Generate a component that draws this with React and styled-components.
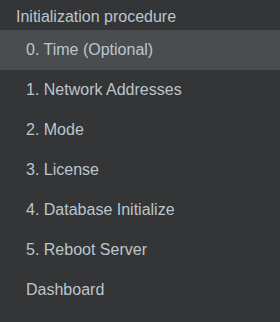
import React from "react";
import styled, { createGlobalStyle } from "styled-components";

const Global = createGlobalStyle`
  html, body { margin: 0; padding: 0; background: #333537; }
  body { font-family: "Liberation Sans", Arial, sans-serif; }
`;

const Panel = styled.nav`
  width: 280px;
  height: 322px;
  background: #333537;
  display: flex;
  flex-direction: column;
`;

const Header = styled.div`
  padding: 4px 0 0 16px;
  line-height: 26px;
  font-size: 16px;
  color: #bcc6cc;
`;

const Item = styled.div`
  height: 40px;
  line-height: 40px;
  padding-left: 26px;
  font-size: 16px;
  color: #bcc6cc;
  background: ${(p) => (p.$active ? "#4a4d4f" : "transparent")};
`;

const items = [
  "0. Time (Optional)",
  "1. Network Addresses",
  "2. Mode",
  "3. License",
  "4. Database Initialize",
  "5. Reboot Server",
  "Dashboard",
];

export default function App() {
  return (
    <>
      <Global />
      <Panel>
        <Header>Initialization procedure</Header>
        {items.map((t, i) => (
          <Item key={t} $active={i === 0}>
            {t}
          </Item>
        ))}
      </Panel>
    </>
  );
}
